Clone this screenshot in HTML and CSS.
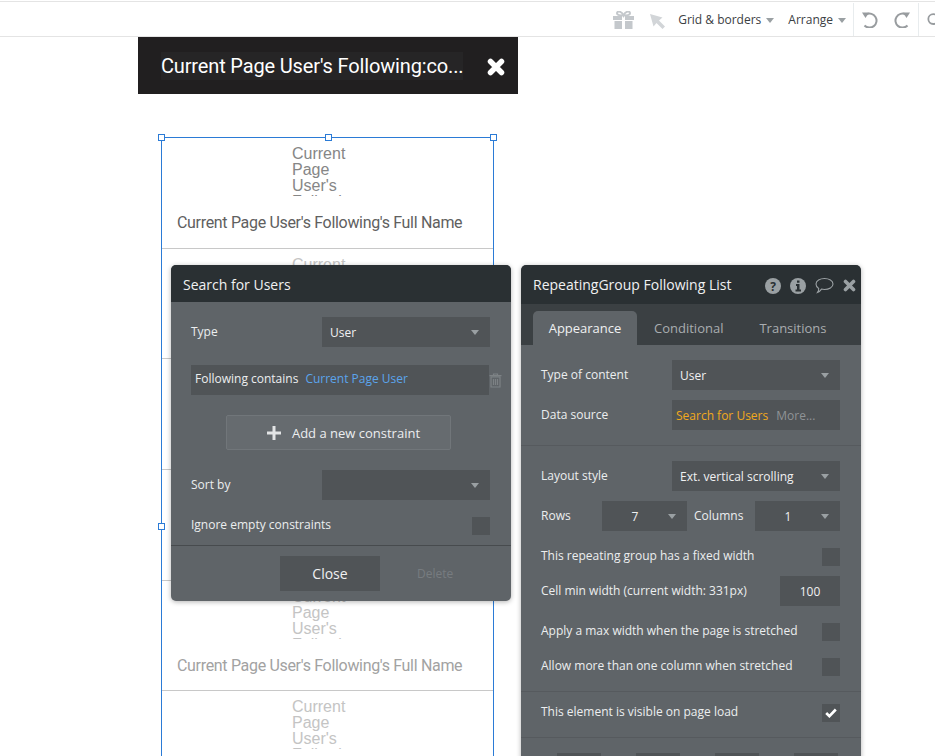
FILE: index.html
```html
<!DOCTYPE html>
<html lang="en">
<head>
<meta charset="utf-8">
<title>Editor</title>
<link rel="stylesheet" href="styles.css">
</head>
<body>
<div class="page">
  <header class="toolbar">
    <svg class="tb-gift" width="21" height="18" viewBox="0 0 21 18"><path fill="#c4c8cc" d="M0 5h9v4H0zM12 5h9v4h-9zM1.500 10H9v8H1.500zM12 10h7.500v8H12z"/><path fill="none" stroke="#c4c8cc" stroke-width="2" d="M10.500 4.500C8.500 0 4 -.5 4 2.200c0 2 3.500 2.300 6.500 2.300s6.500-.3 6.500-2.300c0-2.700-4.500-2.200-6.500 2.300z"/></svg>
    <svg class="tb-cursor" width="15" height="15" viewBox="0 0 15 15"><path fill="#d2d5d8" d="M0 0l12.500 3.500L9 6.500 15 12.500 12.500 15 6.500 9 3.500 12.500z"/></svg>
    <span class="tb-item">Grid &amp; borders</span><i class="caret tb-caret"></i>
    <span class="tb-item tb-arrange">Arrange</span><i class="caret tb-caret"></i>
    <div class="tb-cell tb-undo">
      <svg width="16" height="16" viewBox="0 0 16 16"><path fill="none" stroke="#989c9f" stroke-width="2" d="M4.500 2.300A7 7 0 1 1 2.500 13.500"/><path fill="#989c9f" d="M0 .5h7l-3.500 5.500z"/></svg>
      <svg class="redo" width="16" height="16" viewBox="0 0 16 16"><path fill="none" stroke="#989c9f" stroke-width="2" d="M11.500 2.300A7 7 0 1 0 13.500 13.500"/><path fill="#989c9f" d="M16 .5H9l3.500 5.500z"/></svg>
    </div>
    <div class="tb-cell tb-search">
      <svg width="9" height="18" viewBox="0 0 9 18"><circle cx="7" cy="8" r="5.500" fill="none" stroke="#989c9f" stroke-width="2"/></svg>
    </div>
  </header>

  <div class="titlebar">
    <div class="titlebar-text">Current Page User's Following:co...</div>
    <svg class="titlebar-x" width="18" height="18" viewBox="0 0 18 18"><path fill="none" stroke="#fff" stroke-width="5.500" stroke-linecap="round" d="M3.500 3.500l11 11M14.500 3.500l-11 11"/></svg>
  </div>

  <section class="group">
    <article class="cell cell-first"><div class="pic">Current Page User's Following's Picture</div><div class="name">Current Page User's Following's Full Name</div></article>
    <article class="cell"><div class="pic">Current Page User's Following's Picture</div><div class="name">Current Page User's Following's Full Name</div></article>
    <article class="cell"><div class="pic">Current Page User's Following's Picture</div><div class="name">Current Page User's Following's Full Name</div></article>
    <article class="cell"><div class="pic">Current Page User's Following's Picture</div><div class="name">Current Page User's Following's Full Name</div></article>
    <article class="cell"><div class="pic">Current Page User's Following's Picture</div><div class="name">Current Page User's Following's Full Name</div></article>
    <article class="cell"><div class="pic">Current Page User's Following's Picture</div><div class="name">Current Page User's Following's Full Name</div></article>
    <article class="cell"><div class="pic">Current Page User's Following's Picture</div><div class="name">Current Page User's Following's Full Name</div></article>
    <i class="handle h-tl"></i><i class="handle h-tc"></i><i class="handle h-tr"></i><i class="handle h-ml"></i>
  </section>

  <aside class="panel panel-search">
    <div class="panel-head"><span class="panel-title title-search">Search for Users</span></div>
    <div class="search-body">
      <div class="row"><span class="label">Type</span><div class="field select w168"><span>User</span><i class="caret"></i></div></div>
      <div class="constraint-row">
        <div class="constraint"><span>Following contains</span><span class="blue">Current Page User</span></div>
        <svg class="trash" width="13" height="15" viewBox="0 0 13 15"><path fill="none" stroke="#7d8285" stroke-width="1.200" d="M2 4h9v10H2zM.500 2.700h12M4.500 2.500V1h4v1.500M4.500 6v6M6.500 6v6M8.500 6v6"/></svg>
      </div>
      <div class="add-btn"><svg width="14" height="14" viewBox="0 0 14 14"><path fill="#e2e4e5" d="M5.500 0h3v5.500H14v3H8.500V14h-3V8.500H0v-3h5.500z"/></svg><span>Add a new constraint</span></div>
      <div class="row"><span class="label">Sort by</span><div class="field select w168"><span></span><i class="caret"></i></div></div>
      <div class="row row-ignore"><span class="label label-up2">Ignore empty constraints</span><i class="check"></i></div>
    </div>
    <div class="search-foot">
      <div class="close-btn">Close</div>
      <span class="delete">Delete</span>
    </div>
  </aside>

  <aside class="panel panel-props">
    <div class="panel-head head-props">
      <span class="panel-title">RepeatingGroup Following List</span>
      <div class="head-icons">
        <svg width="16" height="16" viewBox="0 0 16 16"><circle cx="8" cy="8" r="8" fill="#9aa0a3"/><text class="icon-glyph" x="8" y="12.500" text-anchor="middle">?</text></svg>
        <svg width="16" height="16" viewBox="0 0 16 16"><circle cx="8" cy="8" r="8" fill="#9aa0a3"/><path fill="#2a3033" d="M7 2.500h2.500v2.200H7zM6 6h3.500v5.500H11V13.500H5.500v-2H7V8H6z"/></svg>
        <svg width="19" height="17" viewBox="0 0 19 17"><path fill="none" stroke="#9aa0a3" stroke-width="1.100" d="M9.500 1.500c4.500 0 8.500 2.300 8.500 5.500s-4 5.500-8.500 5.500c-1 0-2 0-3-.4C5.500 13.500 4 15 2.500 15.500c.8-1 1.300-2.500 1.200-4C2 10.500 1 8.800 1 7c0-3.200 4-5.500 8.500-5.500z"/></svg>
        <svg width="13" height="13" viewBox="0 0 13 13"><path fill="none" stroke="#9aa0a3" stroke-width="3.600" stroke-linecap="round" d="M2.500 2.500l8 8M10.500 2.500l-8 8"/></svg>
      </div>
    </div>
    <nav class="tabs">
      <span class="tab tab-active">Appearance</span>
      <span class="tab tab-cond">Conditional</span>
      <span class="tab tab-trans">Transitions</span>
    </nav>
    <div class="props-section sec-data">
      <div class="row"><span class="label">Type of content</span><div class="field select w168"><span>User</span><i class="caret"></i></div></div>
      <div class="row"><span class="label label-up1">Data source</span><div class="field w168 source"><span class="orange">Search for Users</span><span class="more">More...</span></div></div>
    </div>
    <div class="props-section sec-layout">
      <div class="row"><span class="label">Layout style</span><div class="field select w168"><span>Ext. vertical scrolling</span><i class="caret"></i></div></div>
      <div class="row row-start">
        <span class="label label-rows">Rows</span>
        <div class="field select w85 center"><span>7</span><i class="caret"></i></div>
        <span class="label label-cols">Columns</span>
        <div class="field select w85 center"><span>1</span><i class="caret"></i></div>
      </div>
      <div class="row row-fixed"><span class="label label-up3">This repeating group has a fixed width</span><i class="check"></i></div>
      <div class="row row-min"><span class="label">Cell min width (current width: 331px)</span><div class="field w60 number">100</div></div>
      <div class="row row-max"><span class="label label-up2">Apply a max width when the page is stretched</span><i class="check"></i></div>
      <div class="row row-cols"><span class="label label-up2">Allow more than one column when stretched</span><i class="check"></i></div>
    </div>
    <div class="props-section sec-visible">
      <div class="row"><span class="label label-up3">This element is visible on page load</span>
        <i class="check"><svg width="12" height="10" viewBox="0 0 12 10"><path fill="none" stroke="#fff" stroke-width="2.600" d="M1.200 5l3.200 3.200L10.800 1.500"/></svg></i></div>
    </div>
    <div class="stubs"><i></i><i></i><i></i><i></i></div>
  </aside>
</div>
</body>
</html>
```

FILE: styles.css
```css
* { box-sizing: border-box; }
html, body { margin: 0; padding: 0; background: #fff; }
.page { position: relative; width: 935px; height: 756px; overflow: hidden; font-family: "Open Sans", "Noto Sans", sans-serif; }

/* top toolbar */
.toolbar { height: 36px; margin-top: 1px; padding-top: 1px; border-top: 1px solid #e4e4e4; border-bottom: 1px solid #e4e4e4; display: flex; align-items: center; justify-content: flex-end; color: #3b4043; font-size: 12px; }
.tb-gift { margin-right: 16px; margin-top: 1px; }
.tb-cursor { margin-right: 13px; margin-top: 3px; }
.tb-item { line-height: 18px; }
.tb-caret { margin-left: 5px; border-top-color: #c4c8cc; margin-top: 2px; }
.tb-arrange { margin-left: 14px; }
.tb-cell { height: 100%; display: flex; align-items: center; border-left: 1px solid #e8ecee; }
.tb-undo { margin-left: 7px; padding-left: 8px; width: 65px; }
.tb-undo .redo { margin-left: 16px; }
.tb-search { width: 17px; overflow: hidden; padding-left: 8px; }
.caret { display: block; width: 0; height: 0; border-left: 4px solid transparent; border-right: 4px solid transparent; border-top: 5px solid #9aa0a3; flex: none; }

/* dark title bar */
.titlebar { width: 380px; height: 57px; margin-left: 138px; background: #211f20; display: flex; align-items: center; padding-left: 23px; }
.titlebar-text { width: 302px; height: 28px; background: #262526; color: #fff; font: 400 20px/28px Roboto, sans-serif; letter-spacing: -.15px; white-space: nowrap; overflow: hidden; }
.titlebar-x { margin: 2px 0 0 24px; }

/* repeating group */
.group { position: relative; width: 333px; margin-left: 161px; margin-top: 43px; border: 1px solid #2b7bd6; border-bottom: 0; height: 700px; }
.cell { height: 110.67px; border-bottom: 1px solid #c8c8c8; padding-top: 8px; }
.cell:last-of-type { border-bottom: 0; }
.pic { margin-left: 130px; width: 66px; height: 50px; overflow: hidden; font: 16px/16px "Liberation Sans", sans-serif; color: #c4c4c4; }
.name { margin: 18px 0 0 15px; font: 16px/18px Roboto, sans-serif; letter-spacing: -.32px; color: #a2a2a2; white-space: nowrap; }
.cell-first .pic { color: #868686; }
.cell-first .name { color: #606060; }
.handle { position: absolute; width: 7px; height: 7px; background: #fff; border: 1px solid #2b7bd6; }
.h-tl { left: -4px; top: -4px; }
.h-tc { left: 163px; top: -4px; }
.h-tr { left: 328px; top: -4px; }
.h-ml { left: -4px; top: 385px; }

/* panels */
.panel { position: absolute; width: 340px; background: #5f6468; color: #eceeef; font-size: 12px; border-radius: 5px; box-shadow: 0 1px 5px rgba(0,0,0,.3); }
.panel-search { left: 171px; top: 265px; height: 336px; display: flex; flex-direction: column; }
.panel-props { left: 521px; top: 265px; height: 520px; overflow: hidden; }
.panel-head { height: 37px; background: #2a3033; border-radius: 5px 5px 0 0; display: flex; align-items: center; padding-left: 12px; }
.head-props { height: 39px; justify-content: space-between; padding-right: 5px; }
.panel-title { font-size: 14px; color: #f0f1f2; }
.title-search { margin-top: 2px; }
.head-icons { display: flex; align-items: center; gap: 9px; margin-top: 2px; }
.icon-glyph { font: 700 12px "Open Sans", sans-serif; fill: #2a3033; }

.row { display: flex; align-items: center; justify-content: space-between; height: 30px; }
.row-start { justify-content: flex-start; }
.label { color: #eceeef; line-height: 16px; white-space: nowrap; }
.label-up1 { margin-top: -1px; }
.label-up2 { margin-top: -2px; }
.label-up3 { margin-top: -3px; }
.field { height: 30px; background: #505457; display: flex; align-items: center; font-size: 12px; padding-left: 8px; color: #f0f1f2; }
.select { justify-content: space-between; padding-right: 11px; }
.w168 { width: 168px; }
.w85 { width: 85px; }
.w60 { width: 60px; }
.center { padding-left: 0; }
.center span { flex: none; width: 66px; text-align: center; }
.check { display: flex; align-items: center; justify-content: center; width: 18px; height: 18px; background: #505457; flex: none; }

/* search panel */
.search-body { flex: 1; padding: 15px 21px 0 20px; border-bottom: 1px solid #474b4e; }
.constraint-row { position: relative; margin-top: 18px; }
.constraint { height: 30px; width: 298px; background: #505457; display: flex; align-items: center; gap: 7px; padding: 0 0 4px 4px; font-size: 12px; }
.blue { color: #5ba4ec; }
.trash { position: absolute; left: 298px; top: 8px; }
.add-btn { margin: 20px 0 0 35px; width: 225px; height: 35px; padding-left: 10px; background: #666b6f; border: 1px solid #71767a; border-radius: 2px; display: flex; align-items: center; justify-content: center; gap: 11px; font-size: 13px; color: #eceeef; }
.add-btn + .row { margin-top: 20px; }
.row-ignore { margin-top: 13px; height: 26px; }
.search-foot { height: 55px; position: relative; display: flex; align-items: center; padding-left: 109px; }
.close-btn { width: 100px; height: 35px; background: #505457; color: #f0f1f2; font-size: 14px; line-height: 35px; text-align: center; }
.delete { margin-left: 37px; font-size: 12px; color: #777c80; }

/* props panel */
.tabs { height: 41px; background: #3b4043; display: flex; align-items: flex-end; padding-left: 12px; }
.tab { height: 34px; line-height: 34px; font-size: 13px; color: #a9adb0; }
.tab-active { width: 104px; text-align: center; background: #5f6468; border-radius: 5px 5px 0 0; color: #f0f1f2; }
.tab-cond { margin-left: 17px; }
.tab-trans { margin-left: 36px; }
.props-section { padding: 0 21px 0 20px; border-bottom: 1px solid #565a5e; }
.sec-data { padding-top: 15px; height: 101px; display: flex; flex-direction: column; gap: 10px; }
.source { gap: 8px; padding-left: 4px; }
.orange { color: #f1a91c; white-space: nowrap; }
.more { color: #8f9396; }
.sec-layout { height: 246px; padding-top: 15px; }
.sec-layout .row-start { margin-top: 10px; }
.sec-layout .row-fixed { margin-top: 11px; }
.sec-layout .row-min { margin-top: 4px; }
.sec-layout .row-max { margin-top: 11px; }
.sec-layout .row-cols { margin-top: 5px; }
.label-rows { width: 61px; }
.label-cols { width: 61px; margin-left: 7px; }
.number { justify-content: center; padding-left: 0; }
.sec-visible { height: 46px; padding-top: 6px; }
.stubs { display: flex; padding: 15px 0 0 36px; gap: 35px; }
.stubs i { display: block; width: 44px; height: 30px; background: #505457; }
```
